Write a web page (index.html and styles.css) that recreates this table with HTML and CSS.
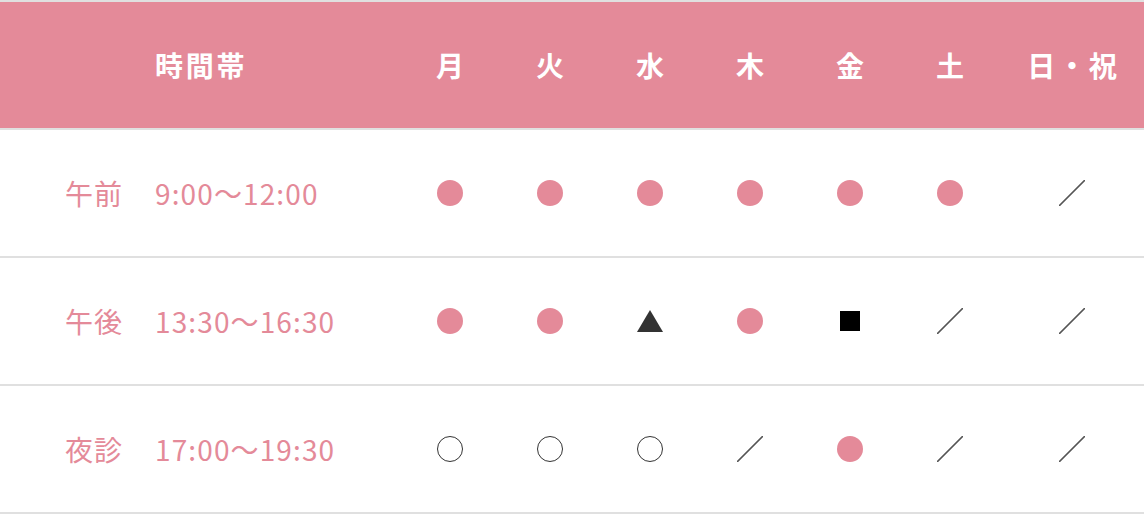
FILE: index.html
```html
<!DOCTYPE html>
<html lang="ja">
<head>
<meta charset="utf-8">
<title>診療時間</title>
<link rel="stylesheet" href="styles.css">
</head>
<body>
<table class="schedule">
  <thead>
    <tr>
      <th class="lab"></th>
      <th class="time">時間帯</th>
      <th class="day">月</th>
      <th class="day">火</th>
      <th class="day">水</th>
      <th class="day">木</th>
      <th class="day">金</th>
      <th class="day">土</th>
      <th class="day last">日・祝</th>
    </tr>
  </thead>
  <tbody>
    <tr>
      <td class="lab">午前</td>
      <td class="time">9:00〜12:00</td>
      <td class="mk"><span class="dot"></span></td>
      <td class="mk"><span class="dot"></span></td>
      <td class="mk"><span class="dot"></span></td>
      <td class="mk"><span class="dot"></span></td>
      <td class="mk"><span class="dot"></span></td>
      <td class="mk"><span class="dot"></span></td>
      <td class="mk"><span class="slash"></span></td>
    </tr>
    <tr>
      <td class="lab">午後</td>
      <td class="time">13:30〜16:30</td>
      <td class="mk"><span class="dot"></span></td>
      <td class="mk"><span class="dot"></span></td>
      <td class="mk"><span class="tri"></span></td>
      <td class="mk"><span class="dot"></span></td>
      <td class="mk"><span class="sq"></span></td>
      <td class="mk"><span class="slash"></span></td>
      <td class="mk"><span class="slash"></span></td>
    </tr>
    <tr>
      <td class="lab">夜診</td>
      <td class="time">17:00〜19:30</td>
      <td class="mk"><span class="ring"></span></td>
      <td class="mk"><span class="ring"></span></td>
      <td class="mk"><span class="ring"></span></td>
      <td class="mk"><span class="slash"></span></td>
      <td class="mk"><span class="dot"></span></td>
      <td class="mk"><span class="slash"></span></td>
      <td class="mk"><span class="slash"></span></td>
    </tr>
  </tbody>
</table>
</body>
</html>
```

FILE: styles.css
```css
html, body {
  margin: 0;
  padding: 0;
  background: #fff;
}
body {
  font-family: "Noto Sans CJK JP", "Noto Sans", sans-serif;
}
.schedule {
  width: 1144px;
  border-collapse: collapse;
  table-layout: fixed;
}
.schedule th,
.schedule td {
  border-top: 2px solid #e0e0e0;
  border-bottom: 2px solid #e0e0e0;
  height: 128px;
  padding: 0;
  box-sizing: border-box;
  vertical-align: middle;
}
.schedule th {
  background: #e48a99;
  color: #fff;
  font-size: 28px;
  font-weight: 700;
  letter-spacing: 0.1em;
}
.schedule td {
  color: #e48a99;
  font-size: 28px;
  font-weight: 400;
  letter-spacing: 0.04em;
}
.schedule .lab {
  width: 155px;
  text-align: left;
  padding-left: 65px;
}
.schedule .time {
  width: 245px;
  text-align: left;
}
.schedule .day,
.schedule .mk {
  width: 100px;
  text-align: center;
}
.schedule th.day {
  text-indent: 0.1em;
}
.schedule .last {
  width: 144px;
}
.mk span {
  display: block;
  margin: 0 auto;
}
.dot {
  width: 26px;
  height: 26px;
  border-radius: 50%;
  background: #e48a99;
}
.ring {
  width: 24px;
  height: 24px;
  border-radius: 50%;
  border: 1px solid #333;
}
.sq {
  width: 20px;
  height: 20px;
  background: #000;
}
.tri {
  width: 0;
  height: 0;
  border-left: 13px solid transparent;
  border-right: 13px solid transparent;
  border-bottom: 22px solid #333;
}
.slash {
  width: 26px;
  height: 26px;
  background: linear-gradient(to bottom right, transparent calc(50% - 0.9px), #555 calc(50% - 0.6px), #555 calc(50% + 0.6px), transparent calc(50% + 0.9px));
}
```
